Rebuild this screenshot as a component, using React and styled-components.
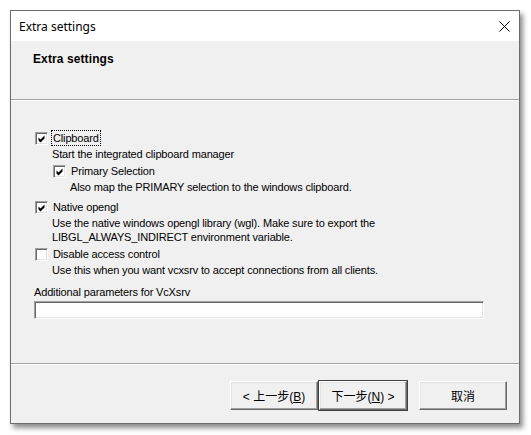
import React from "react";
import styled, { createGlobalStyle } from "styled-components";

const GlobalStyle = createGlobalStyle`
    html, body {
        margin: 0;
        padding: 0;
        background: #ffffff;
    }
    body {
        font-family: "Liberation Sans", Arial, "Noto Sans CJK SC", sans-serif;
        font-size: 11px;
        letter-spacing: -0.15px;
        color: #000000;
    }
`

const Screen = styled.div`
    width: 531px;
    height: 435px;
    padding: 10px 0 0 10px;
    box-sizing: border-box;
`

const Window = styled.div`
    width: 510px;
    height: 414px;
    box-sizing: border-box;
    border: 1px solid #6d6d6d;
    background: #f0f0f0;
    box-shadow: 3px 4px 5px rgba(0,0,0,0.45);
    display: flex;
    flex-direction: column;
`

const TitleBar = styled.div`
    height: 30px;
    background: #ffffff;
    display: flex;
    align-items: center;
    justify-content: space-between;
    padding: 0 9px 0 8px;
    font-family: "Noto Sans", "Liberation Sans", sans-serif;
    font-size: 12px;
    letter-spacing: 0;
`

const CloseIcon = () => (
    <svg width="11" height="11" viewBox="0 0 11 11">
        <path d="M0.5 0.5 L10.5 10.5 M10.5 0.5 L0.5 10.5" stroke="#000" strokeWidth="1" />
    </svg>
)

const Header = styled.div`
    height: 59px;
    padding: 11px 22px 0;
    box-sizing: border-box;
    border-bottom: 1px solid #a0a0a0;
    box-shadow: 0 1px 0 #ffffff;
    font-weight: bold;
    font-size: 12px;
    letter-spacing: 0.1px;
`

const Body = styled.div`
    flex: 1;
    padding: 31px 0 0 24px;
    display: flex;
    flex-direction: column;
`

const Option = styled.div`
    display: flex;
    flex-direction: column;
    margin-left: ${p => p.indent || 0}px;
    margin-top: ${p => p.gap || 0}px;
`

const OptionRow = styled.label`
    display: flex;
    align-items: center;
    gap: 4px;
    height: 14px;
    line-height: 14px;
`

const Box = styled.span`
    width: 13px;
    height: 13px;
    box-sizing: border-box;
    background: #ffffff;
    border-top: 1px solid #a0a0a0;
    border-left: 1px solid #a0a0a0;
    border-right: 1px solid #ffffff;
    border-bottom: 1px solid #ffffff;
    box-shadow: inset 1px 1px 0 #696969, inset -1px -1px 0 #e3e3e3;
    display: flex;
    align-items: center;
    justify-content: center;
`

const Label = styled.span`
    padding: 0 1px;
    outline: ${p => p.focused ? "1px dotted #000" : "none"};
`

const Description = styled.div`
    margin-left: 17px;
    line-height: 14px;
    margin-top: 2px;
`

const Check = ({ checked }) => (
    <Box>
        {checked && (
            <svg width="9" height="9" viewBox="0 0 9 9">
                <path d="M1.5 3.5 L3.5 5.5 L7.5 1.5 L7.5 4.5 L3.5 8.5 L1.5 6.5 Z" fill="#000" />
            </svg>
        )}
    </Box>
)

const FieldLabel = styled.div`
    margin-top: 8px;
    margin-left: -1px;
    line-height: 14px;
`

const Input = styled.div`
    margin-top: 2px;
    margin-left: -1px;
    width: 450px;
    height: 18px;
    box-sizing: border-box;
    background: #ffffff;
    border-top: 1px solid #a0a0a0;
    border-left: 1px solid #a0a0a0;
    border-right: 1px solid #ffffff;
    border-bottom: 1px solid #ffffff;
    box-shadow: inset 1px 1px 0 #696969, inset -1px -1px 0 #e3e3e3;
`

const Footer = styled.div`
    height: 60px;
    border-top: 1px solid #a0a0a0;
    box-shadow: inset 0 1px 0 #ffffff;
    display: flex;
    justify-content: flex-end;
    padding: 17px 12px 0 0;
    box-sizing: border-box;
    gap: 12px;
`

const ButtonPair = styled.div`
    display: flex;
    gap: 1px;
`

const Button = styled.button`
    width: ${p => p.w || 88}px;
    height: 29px;
    box-sizing: border-box;
    background: #f0f0f0;
    font-family: "Liberation Sans", "Noto Sans CJK SC", sans-serif;
    font-size: 12px;
    letter-spacing: 0;
    color: #000;
    padding: 0;
    border-top: 1px solid #ffffff;
    border-left: 1px solid #ffffff;
    border-right: 1px solid #696969;
    border-bottom: 1px solid #696969;
    box-shadow: ${p => p.primary
        ? "0 0 0 1px #404040, inset -1px -1px 0 #a0a0a0, inset 1px 1px 0 #e3e3e3"
        : "inset -1px -1px 0 #a0a0a0, inset 1px 1px 0 #e3e3e3"};
    u { text-decoration: underline; }
`

export default function App() {
    return (
        <Screen>
            <GlobalStyle />
            <Window>
                <TitleBar>
                    <span>Extra settings</span>
                    <CloseIcon />
                </TitleBar>
                <Header>Extra settings</Header>
                <Body>
                    <Option>
                        <OptionRow>
                            <Check checked />
                            <Label focused>Clipboard</Label>
                        </OptionRow>
                        <Description>Start the integrated clipboard manager</Description>
                    </Option>
                    <Option indent={18} gap={3}>
                        <OptionRow>
                            <Check checked />
                            <Label>Primary Selection</Label>
                        </OptionRow>
                        <Description>Also map the PRIMARY selection to the windows clipboard.</Description>
                    </Option>
                    <Option gap={6}>
                        <OptionRow>
                            <Check checked />
                            <Label>Native opengl</Label>
                        </OptionRow>
                        <Description>
                            Use the native windows opengl library (wgl). Make sure to export the<br />
                            LIBGL_ALWAYS_INDIRECT environment variable.
                        </Description>
                    </Option>
                    <Option gap={3}>
                        <OptionRow>
                            <Check />
                            <Label>Disable access control</Label>
                        </OptionRow>
                        <Description>Use this when you want vcxsrv to accept connections from all clients.</Description>
                    </Option>
                    <FieldLabel>Additional parameters for VcXsrv</FieldLabel>
                    <Input />
                </Body>
                <Footer>
                    <ButtonPair>
                        <Button>&lt; 上一步(<u>B</u>)</Button>
                        <Button primary>下一步(<u>N</u>) &gt;</Button>
                    </ButtonPair>
                    <Button>取消</Button>
                </Footer>
            </Window>
        </Screen>
    );
}
